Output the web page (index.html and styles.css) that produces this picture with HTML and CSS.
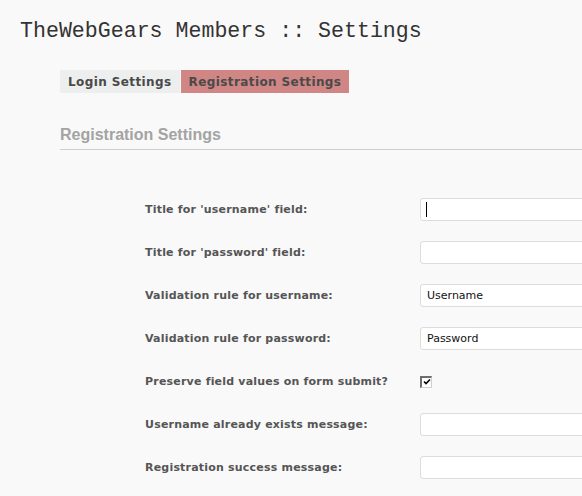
FILE: index.html
```html
<!DOCTYPE html>
<html>
<head>
<meta charset="utf-8">
<link rel="stylesheet" href="styles.css">
</head>
<body>
<h1 class="title">TheWebGears Members :: Settings</h1>
<div class="content">
  <div class="tabs">
    <span class="tab">Login Settings</span>
    <span class="tab active">Registration Settings</span>
  </div>
  <h2 class="section">Registration Settings</h2>
  <div class="form">
    <label class="lbl">Title for 'username' field:</label>
    <div class="field"><span class="input"><span class="caret"></span></span></div>
    <label class="lbl">Title for 'password' field:</label>
    <div class="field"><span class="input"></span></div>
    <label class="lbl">Validation rule for username:</label>
    <div class="field"><span class="input">Username</span></div>
    <label class="lbl">Validation rule for password:</label>
    <div class="field"><span class="input">Password</span></div>
    <label class="lbl">Preserve field values on form submit?</label>
    <div class="field"><span class="check"><svg width="8" height="8" viewBox="0 0 8 8"><path d="M1 3.5 L3 5.5 L7 1.5" fill="none" stroke="#000" stroke-width="1.6"/></svg></span></div>
    <label class="lbl">Username already exists message:</label>
    <div class="field"><span class="input"></span></div>
    <label class="lbl">Registration success message:</label>
    <div class="field"><span class="input"></span></div>
  </div>
</div>
</body>
</html>
```
FILE: styles.css
```css
html, body {
  margin: 0;
  padding: 0;
  background: #f9f9f9;
  overflow: hidden;
}
body {
  width: 582px;
  height: 496px;
}
.title {
  margin: 0;
  padding: 18px 0 0 20px;
  font-family: "Liberation Mono", monospace;
  font-weight: normal;
  font-size: 21.6px;
  line-height: 26px;
  color: #333;
  white-space: nowrap;
}
.content {
  margin-left: 60px;
  overflow: hidden;
}
.tabs {
  display: flex;
  margin-top: 26px;
  gap: 1px;
}
.tab {
  display: block;
  height: 23px;
  line-height: 24px;
  padding: 0 8px;
  background: #ecefee;
  color: #4a4a4a;
  font-family: "DejaVu Sans", sans-serif;
  font-weight: bold;
  font-size: 12px;
  letter-spacing: 0.4px;
}
.tab.active {
  background: #d08685;
}
.section {
  margin: 32px 0 0 0;
  padding-bottom: 5px;
  border-bottom: 1px solid #cfcfcf;
  font-family: "Liberation Sans", sans-serif;
  font-weight: bold;
  font-size: 16px;
  line-height: 19px;
  color: #a3a3a3;
}
.form {
  display: grid;
  grid-template-columns: 275px 1fr;
  grid-auto-rows: 43px;
  padding: 38px 0 0 85px;
  align-items: center;
}
.lbl {
  font-family: "DejaVu Sans", sans-serif;
  font-weight: bold;
  font-size: 11px;
  letter-spacing: 0.2px;
  color: #555;
  white-space: nowrap;
}
.field {
  display: flex;
  align-items: center;
}
.input {
  display: flex;
  align-items: center;
  box-sizing: border-box;
  width: 200px;
  flex: none;
  height: 23px;
  padding-left: 6px;
  background: #fff;
  border: 1px solid #dcdcdc;
  border-radius: 3px;
  font-family: "DejaVu Sans", sans-serif;
  font-size: 11px;
  color: #111;
}
.caret {
  display: block;
  width: 1px;
  height: 15px;
  background: #000;
  margin-left: -1px;
}
.check {
  display: flex;
  align-items: center;
  justify-content: center;
  box-sizing: border-box;
  width: 12px;
  height: 12px;
  background: #fff;
  border-top: 2px solid #6e6e6e;
  border-left: 2px solid #6e6e6e;
  border-right: 1px solid #d4d0c8;
  border-bottom: 1px solid #d4d0c8;
}
```
